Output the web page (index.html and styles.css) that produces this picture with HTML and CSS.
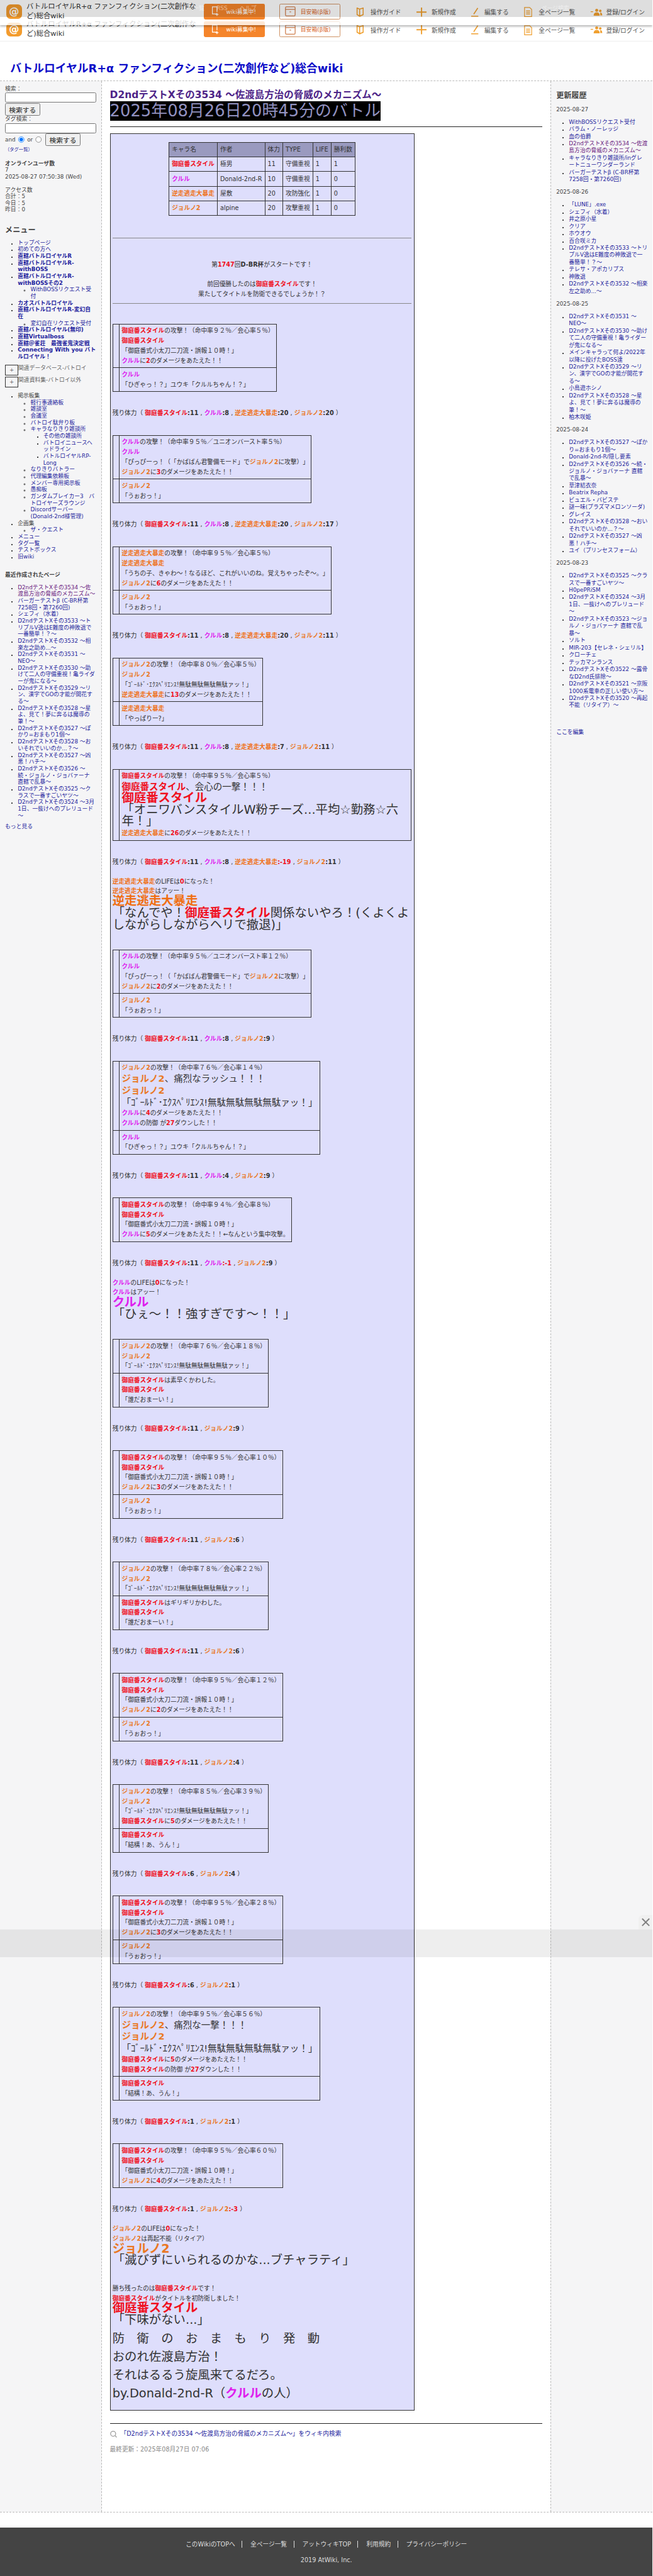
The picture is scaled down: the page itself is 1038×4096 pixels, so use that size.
FILE: index.html
```html
<!DOCTYPE html>
<html lang="ja">
<head>
    <meta charset="UTF-8">
    <title>D2ndテストXその3534 ～佐渡島方治の脅威のメカニズム～</title>
    <link rel="stylesheet" href="styles.css">
</head>
<body>
<div class="page">
    <header class="hdr">
        <div class="hdr-row">
            <div class="brand"><span class="logo">@</span><span class="brand-name">バトルロイヤルR+α ファンフィクション(二次創作など)総合wiki</span></div>
            <a class="btn-recruit"><svg width="17" height="20" viewBox="0 0 17 20" fill="none" stroke="#fff" stroke-width="1.5"><path d="M11 15H2V1h9v10M8 5h.01M11 13v6M8 16h6"/></svg>wiki募集中!</a>
            <a class="btn-box"><svg width="21" height="20" viewBox="0 0 21 20" fill="none" stroke="#d08050" stroke-width="1.6"><rect x="1" y="1" width="19" height="18" rx="2"/><path d="M1 6h19M9 11h3"/></svg>目安箱(β版)</a>
            <nav class="hdr-nav">
                <a><svg width="16" height="18" viewBox="0 0 16 18" fill="none" stroke="#f0a030" stroke-width="2"><path d="M2 1l5 2 0 14-5-3zM7 3l7-2v13l-7 3"/></svg>操作ガイド</a>
                <a class="gap-s"><svg width="20" height="18" viewBox="0 0 20 18" fill="none" stroke="#f0a030" stroke-width="2.4"><path d="M10 0v18M0 9h20"/></svg>新規作成</a>
                <a class="gap-s"><svg width="16" height="18" viewBox="0 0 16 18" fill="none" stroke="#f0a030" stroke-width="2"><path d="M13 1L5 13M0 17h14"/></svg>編集する</a>
                <a><svg width="16" height="20" viewBox="0 0 16 20" fill="none" stroke="#f0a030" stroke-width="1.5"><path d="M1 1h10l4 4v14H1zM4 8h8M4 11h8M4 14h8"/></svg>全ページ一覧</a>
                <a class="gap-xs"><svg width="24" height="14" viewBox="0 0 24 14" fill="#f0a030"><circle cx="13" cy="3" r="3"/><circle cx="20" cy="4" r="2.4"/><path d="M7 14c0-5 2-7 6-7s6 2 6 7zM20 7c2.500 0 4 2 4 6h-4zM1 5h5v1.600H1z"/></svg>登録/ログイン</a>
            </nav>
        </div>
    </header>

    <div class="hdr-float">
        <div class="hdr-row">
            <div class="brand"><span class="logo">@</span><span class="brand-name">バトルロイヤルR+α ファンフィクション(二次創作など)総合wiki</span></div>
            <a class="btn-recruit"><svg width="17" height="20" viewBox="0 0 17 20" fill="none" stroke="#fff" stroke-width="1.5"><path d="M11 15H2V1h9v10M8 5h.01M11 13v6M8 16h6"/></svg>wiki募集中!</a>
            <a class="btn-box"><svg width="21" height="20" viewBox="0 0 21 20" fill="none" stroke="#d08050" stroke-width="1.6"><rect x="1" y="1" width="19" height="18" rx="2"/><path d="M1 6h19M9 11h3"/></svg>目安箱(β版)</a>
            <nav class="hdr-nav">
                <a><svg width="16" height="18" viewBox="0 0 16 18" fill="none" stroke="#f0a030" stroke-width="2"><path d="M2 1l5 2 0 14-5-3zM7 3l7-2v13l-7 3"/></svg>操作ガイド</a>
                <a class="gap-s"><svg width="20" height="18" viewBox="0 0 20 18" fill="none" stroke="#f0a030" stroke-width="2.4"><path d="M10 0v18M0 9h20"/></svg>新規作成</a>
                <a class="gap-s"><svg width="16" height="18" viewBox="0 0 16 18" fill="none" stroke="#f0a030" stroke-width="2"><path d="M13 1L5 13M0 17h14"/></svg>編集する</a>
                <a><svg width="16" height="20" viewBox="0 0 16 20" fill="none" stroke="#f0a030" stroke-width="1.5"><path d="M1 1h10l4 4v14H1zM4 8h8M4 11h8M4 14h8"/></svg>全ページ一覧</a>
                <a class="gap-xs"><svg width="24" height="14" viewBox="0 0 24 14" fill="#f0a030"><circle cx="13" cy="3" r="3"/><circle cx="20" cy="4" r="2.4"/><path d="M7 14c0-5 2-7 6-7s6 2 6 7zM20 7c2.500 0 4 2 4 6h-4zM1 5h5v1.600H1z"/></svg>登録/ログイン</a>
            </nav>
        </div>
    </div>
    <div class="top-band">
        <span class="band-links"><span>一覧</span><span>RSS</span><span>ヘルプ</span></span>
        <span class="band-search">ページ検索</span>
    </div>

    <div class="site-title"><a>バトルロイヤルR+α ファンフィクション(二次創作など)総合wiki</a></div>

    <div class="layout">
        <aside class="side-left">
            <div class="label">検索：</div>
            <input class="search-input" type="text">
            <button class="search-btn">検索する</button>
            <div class="label">タグ検索：</div>
            <input class="search-input" type="text">
            <div class="radio-row">and <input type="radio" name="mode" checked> or <input type="radio" name="mode"> <button class="search-btn">検索する</button></div>
            <div class="tag-link"><a>（タグ一覧）</a></div>

            <div class="counter">
                <b>オンラインユーザ数</b><br>
                7<br>
                2025-08-27 07:50:38 (Wed)<br>
                <br>
                アクセス数<br>
                合計：5<br>
                今日：5<br>
                昨日：0
            </div>

            <h3 class="side-head menu-head">メニュー</h3>
            <ul class="menu">
                <li><a>トップページ</a></li>
                <li><a>初めての方へ</a></li>
                <li><a class="strong">直轄バトルロイヤルR</a></li>
                <li><a class="strong">直轄バトルロイヤルR-withBOSS</a></li>
                <li><a class="strong">直轄バトルロイヤルR-withBOSSその2</a>
                    <ul><li><a>WithBOSSリクエスト受付</a></li></ul></li>
                <li><a class="strong">カオスバトルロイヤル</a></li>
                <li><a class="strong">直轄バトルロイヤルR-変幻自在</a>
                    <ul><li><a>変幻自在リクエスト受付</a></li></ul></li>
                <li><a class="strong">直轄バトルロイヤル(無印)</a></li>
                <li><a class="strong">直轄Virtualboss</a></li>
                <li><a class="strong">直轄＠雀荘　最強雀鬼決定戦</a></li>
                <li><a class="strong">Connecting With you バトルロイヤル！</a></li>
            </ul>
            <div class="fold-row"><span class="fold-btn">+</span>関連データベース-バトロイ</div>
            <div class="fold-row"><span class="fold-btn">+</span>関連資料集-バトロイ以外</div>
            <ul class="menu board-list">
                <li>掲示板集
                    <ul>
                        <li><a>軽行事連絡板</a></li>
                        <li><a>雑談室</a></li>
                        <li><a>会議室</a></li>
                        <li><a>バトロイ駄弁り板</a></li>
                        <li><a>キャラなりきり雑談所</a>
                            <ul>
                                <li><a>その他の雑談所</a></li>
                                <li><a>バトロイニュースヘッドライン</a></li>
                                <li><a>バトルロイヤルRP-Long</a></li>
                            </ul></li>
                        <li><a>なりきりバトラー</a></li>
                        <li><a>代理編集依頼板</a></li>
                        <li><a>メンバー専用掲示板</a></li>
                        <li><a>愚痴板</a></li>
                        <li><a>ガンダムブレイカー3　バトロイヤーズラウンジ</a></li>
                        <li><a>Discordサーバー(Donald-2nd様管理)</a></li>
                    </ul></li>
                <li>企画集
                    <ul><li><a>ザ・クエスト</a></li></ul></li>
                <li><a>メニュー</a></li>
                <li><a>タグ一覧</a></li>
                <li><a>テストボックス</a></li>
                <li><a>旧wiki</a></li>
            </ul>

            <div class="recent-head">最近作成されたページ</div>
            <ul class="menu recent">
                <li><a class="visited">D2ndテストXその3534 ～佐渡島方治の脅威のメカニズム～</a></li>
                <li><a>バーガーテストβ (C-BR杯第7258回・第7260回)</a></li>
                <li><a>シェフィ（水着）</a></li>
                <li><a>D2ndテストXその3533 ～トリプルV逸はE難度の神敗退で一番簡単！？～</a></li>
                <li><a>D2ndテストXその3532 ～相楽左之助め...～</a></li>
                <li><a>D2ndテストXその3531 ～NEO～</a></li>
                <li><a>D2ndテストXその3530 ～助けて二人の守備重視！亀ライダーが鬼になる～</a></li>
                <li><a>D2ndテストXその3529 ～リン、漢字でGOの才能が開花する～</a></li>
                <li><a>D2ndテストXその3528 ～星よ、見て！夢に奔るは魔導の筆！～</a></li>
                <li><a>D2ndテストXその3527 ～ぽかり=おまもり1個～</a></li>
                <li><a>D2ndテストXその3528 ～おいそれでいいのか...？～</a></li>
                <li><a>D2ndテストXその3527 ～凶悪！ハチ～</a></li>
                <li><a>D2ndテストXその3526 ～続・ジョルノ・ジョバァーナ 直轄で乱暴～</a></li>
                <li><a>D2ndテストXその3525 ～クラスで一番すごいヤツ～</a></li>
                <li><a>D2ndテストXその3524 ～3月1日、一抜けへのプレリュード～</a></li>
            </ul>
            <div class="more-link"><a>もっと見る</a></div>
        </aside>

        <main class="content">
            <h2 class="page-title">D2ndテストXその3534 ～佐渡島方治の脅威のメカニズム～</h2>
            <div class="battle-date">2025年08月26日20時45分のバトル</div>
            <div class="rule"></div>

            <div class="battle">
                <table class="stats">
                    <tr><th>キャラ名</th><th>作者</th><th>体力</th><th>TYPE</th><th>LIFE</th><th>勝利数</th></tr>
                    <tr><td><span class="oni">御庭番スタイル</span></td><td>極男</td><td>11</td><td>守備重視</td><td>1</td><td>1</td></tr>
                    <tr><td><span class="kur">クルル</span></td><td>Donald-2nd-R</td><td>10</td><td>守備重視</td><td>1</td><td>0</td></tr>
                    <tr><td><span class="gya">逆走逃走大暴走</span></td><td>屋敷</td><td>20</td><td>攻防強化</td><td>1</td><td>0</td></tr>
                    <tr><td><span class="jor">ジョルノ2</span></td><td>alpine</td><td>20</td><td>攻撃重視</td><td>1</td><td>0</td></tr>
                </table>
                <hr class="sep sep-top">
                <div class="intro">
                    第<span class="num">1747</span>回<b>D-BR杯</b>がスタートです！<br>
                    <br>
                    前回優勝したのは<span class="oni">御庭番スタイル</span>です！<br>
                    果たしてタイトルを防衛できるでしょうか！？
                </div>
                <hr class="sep sep-bottom">

                <table class="log">
                    <tr><td class="mark"></td><td><span class="oni">御庭番スタイル</span>の攻撃！（命中率９２％／会心率５％）<br><span class="oni">御庭番スタイル</span><br>「御庭番式小太刀二刀流・誤報１０時！」<br><span class="kur">クルル</span>に<span class="num">2</span>のダメージをあたえた！！</td></tr>
                    <tr><td class="mark"></td><td><span class="kur">クルル</span><br>「ひぎゃっ！？」ユウキ「クルルちゃん！？」</td></tr>
                </table>
                <p class="hp">残り体力（ <span class="oni">御庭番スタイル</span><b>:11</b> , <span class="kur">クルル</span><b>:8</b> , <span class="gya">逆走逃走大暴走</span><b>:20</b> , <span class="jor">ジョルノ2</span><b>:20</b> ）</p>

                <table class="log">
                    <tr><td class="mark"></td><td><span class="kur">クルル</span>の攻撃！（命中率９５％／ユニオンバースト率５％）<br><span class="kur">クルル</span><br>「ぴっぴーっ！（「かばばん君警備モード」で<span class="jor">ジョルノ2</span>に攻撃）」<br><span class="jor">ジョルノ2</span>に<span class="num">3</span>のダメージをあたえた！！</td></tr>
                    <tr><td class="mark"></td><td><span class="jor">ジョルノ2</span><br>「うぉおっ！」</td></tr>
                </table>
                <p class="hp">残り体力（ <span class="oni">御庭番スタイル</span><b>:11</b> , <span class="kur">クルル</span><b>:8</b> , <span class="gya">逆走逃走大暴走</span><b>:20</b> , <span class="jor">ジョルノ2</span><b>:17</b> ）</p>

                <table class="log">
                    <tr><td class="mark"></td><td><span class="gya">逆走逃走大暴走</span>の攻撃！（命中率９５％／会心率５％）<br><span class="gya">逆走逃走大暴走</span><br>「うちの子、きゃわ～！なるほど、これがいいのね。覚えちゃったぞ～。」<br><span class="jor">ジョルノ2</span>に<span class="num">6</span>のダメージをあたえた！！</td></tr>
                    <tr><td class="mark"></td><td><span class="jor">ジョルノ2</span><br>「うぉおっ！」</td></tr>
                </table>
                <p class="hp">残り体力（ <span class="oni">御庭番スタイル</span><b>:11</b> , <span class="kur">クルル</span><b>:8</b> , <span class="gya">逆走逃走大暴走</span><b>:20</b> , <span class="jor">ジョルノ2</span><b>:11</b> ）</p>

                <table class="log">
                    <tr><td class="mark"></td><td><span class="jor">ジョルノ2</span>の攻撃！（命中率８０％／会心率５％）<br><span class="jor">ジョルノ2</span><br>「ｺﾞｰﾙﾄﾞ･ｴｸｽﾍﾟﾘｴﾝｽ!無駄無駄無駄無駄ァッ！」<br><span class="gya">逆走逃走大暴走</span>に<span class="num">13</span>のダメージをあたえた！！</td></tr>
                    <tr><td class="mark"></td><td><span class="gya">逆走逃走大暴走</span><br>「やっぱりー?」</td></tr>
                </table>
                <p class="hp">残り体力（ <span class="oni">御庭番スタイル</span><b>:11</b> , <span class="kur">クルル</span><b>:8</b> , <span class="gya">逆走逃走大暴走</span><b>:7</b> , <span class="jor">ジョルノ2</span><b>:11</b> ）</p>

                <table class="log log-wide">
                    <tr><td class="mark"></td><td><span class="oni">御庭番スタイル</span>の攻撃！（命中率９５％／会心率５％）<br><span class="size-l"><span class="oni">御庭番スタイル</span>、会心の一撃！！！</span><br><span class="size-xl oni">御庭番スタイル</span><br><span class="size-xl">「オニワバンスタイルW粉チーズ...平均☆勤務☆六年！」</span><br><span class="gya">逆走逃走大暴走</span>に<span class="num">26</span>のダメージをあたえた！！</td></tr>
                </table>
                <p class="hp hp-out">残り体力（ <span class="oni">御庭番スタイル</span><b>:11</b> , <span class="kur">クルル</span><b>:8</b> , <span class="gya">逆走逃走大暴走</span><b class="num">:-19</b> , <span class="jor">ジョルノ2</span><b>:11</b> ）</p>
                <div class="last-words">
                    <span class="gya">逆走逃走大暴走</span>のLIFEは<span class="num">0</span>になった！<br>
                    <span class="gya">逆走逃走大暴走</span>はアッー！<br>
                    <span class="size-xl gya">逆走逃走大暴走</span><br>
                    <span class="size-xl">「なんでや！<span class="oni">御庭番スタイル</span>関係ないやろ！(くよくよしながらしながらヘリで撤退)」</span>
                </div>

                <table class="log">
                    <tr><td class="mark"></td><td><span class="kur">クルル</span>の攻撃！（命中率９５％／ユニオンバースト率１２％）<br><span class="kur">クルル</span><br>「ぴっぴーっ！（「かばばん君警備モード」で<span class="jor">ジョルノ2</span>に攻撃）」<br><span class="jor">ジョルノ2</span>に<span class="num">2</span>のダメージをあたえた！！</td></tr>
                    <tr><td class="mark"></td><td><span class="jor">ジョルノ2</span><br>「うぉおっ！」</td></tr>
                </table>
                <p class="hp">残り体力（ <span class="oni">御庭番スタイル</span><b>:11</b> , <span class="kur">クルル</span><b>:8</b> , <span class="jor">ジョルノ2</span><b>:9</b> ）</p>

                <table class="log">
                    <tr><td class="mark"></td><td><span class="jor">ジョルノ2</span>の攻撃！（命中率７６％／会心率１４％）<br><span class="size-l"><span class="jor">ジョルノ2</span>、痛烈なラッシュ！！！</span><br><span class="size-l jor">ジョルノ2</span><br><span class="size-l">「ｺﾞｰﾙﾄﾞ･ｴｸｽﾍﾟﾘｴﾝｽ!無駄無駄無駄無駄ァッ！」</span><br><span class="kur">クルル</span>に<span class="num">4</span>のダメージをあたえた！！<br><span class="kur">クルル</span>の防御 が<span class="num">27</span>ダウンした！！</td></tr>
                    <tr><td class="mark"></td><td><span class="kur">クルル</span><br>「ひぎゃっ！？」ユウキ「クルルちゃん！？」</td></tr>
                </table>
                <p class="hp">残り体力（ <span class="oni">御庭番スタイル</span><b>:11</b> , <span class="kur">クルル</span><b>:4</b> , <span class="jor">ジョルノ2</span><b>:9</b> ）</p>

                <table class="log">
                    <tr><td class="mark"></td><td><span class="oni">御庭番スタイル</span>の攻撃！（命中率９４％／会心率８％）<br><span class="oni">御庭番スタイル</span><br>「御庭番式小太刀二刀流・誤報１０時！」<br><span class="kur">クルル</span>に<span class="num">5</span>のダメージをあたえた！！←なんという集中攻撃。</td></tr>
                </table>
                <p class="hp hp-out">残り体力（ <span class="oni">御庭番スタイル</span><b>:11</b> , <span class="kur">クルル</span><b class="num">:-1</b> , <span class="jor">ジョルノ2</span><b>:9</b> ）</p>
                <div class="last-words">
                    <span class="kur">クルル</span>のLIFEは<span class="num">0</span>になった！<br>
                    <span class="kur">クルル</span>はアッー！<br>
                    <span class="size-xl kur">クルル</span><br>
                    <span class="size-xl">「ひぇ～！！強すぎです～！！」</span>
                </div>

                <table class="log">
                    <tr><td class="mark"></td><td><span class="jor">ジョルノ2</span>の攻撃！（命中率７６％／会心率１８％）<br><span class="jor">ジョルノ2</span><br>「ｺﾞｰﾙﾄﾞ･ｴｸｽﾍﾟﾘｴﾝｽ!無駄無駄無駄無駄ァッ！」</td></tr>
                    <tr><td class="mark"></td><td><span class="oni">御庭番スタイル</span>は素早くかわした。<br><span class="oni">御庭番スタイル</span><br>「誰だおまーい！」</td></tr>
                </table>
                <p class="hp">残り体力（ <span class="oni">御庭番スタイル</span><b>:11</b> , <span class="jor">ジョルノ2</span><b>:9</b> ）</p>

                <table class="log">
                    <tr><td class="mark"></td><td><span class="oni">御庭番スタイル</span>の攻撃！（命中率９５％／会心率１０％）<br><span class="oni">御庭番スタイル</span><br>「御庭番式小太刀二刀流・誤報１０時！」<br><span class="jor">ジョルノ2</span>に<span class="num">3</span>のダメージをあたえた！！</td></tr>
                    <tr><td class="mark"></td><td><span class="jor">ジョルノ2</span><br>「うぉおっ！」</td></tr>
                </table>
                <p class="hp">残り体力（ <span class="oni">御庭番スタイル</span><b>:11</b> , <span class="jor">ジョルノ2</span><b>:6</b> ）</p>

                <table class="log">
                    <tr><td class="mark"></td><td><span class="jor">ジョルノ2</span>の攻撃！（命中率７８％／会心率２２％）<br><span class="jor">ジョルノ2</span><br>「ｺﾞｰﾙﾄﾞ･ｴｸｽﾍﾟﾘｴﾝｽ!無駄無駄無駄無駄ァッ！」</td></tr>
                    <tr><td class="mark"></td><td><span class="oni">御庭番スタイル</span>はギリギリかわした。<br><span class="oni">御庭番スタイル</span><br>「誰だおまーい！」</td></tr>
                </table>
                <p class="hp">残り体力（ <span class="oni">御庭番スタイル</span><b>:11</b> , <span class="jor">ジョルノ2</span><b>:6</b> ）</p>

                <table class="log">
                    <tr><td class="mark"></td><td><span class="oni">御庭番スタイル</span>の攻撃！（命中率９５％／会心率１２％）<br><span class="oni">御庭番スタイル</span><br>「御庭番式小太刀二刀流・誤報１０時！」<br><span class="jor">ジョルノ2</span>に<span class="num">2</span>のダメージをあたえた！！</td></tr>
                    <tr><td class="mark"></td><td><span class="jor">ジョルノ2</span><br>「うぉおっ！」</td></tr>
                </table>
                <p class="hp">残り体力（ <span class="oni">御庭番スタイル</span><b>:11</b> , <span class="jor">ジョルノ2</span><b>:4</b> ）</p>

                <table class="log">
                    <tr><td class="mark"></td><td><span class="jor">ジョルノ2</span>の攻撃！（命中率８５％／会心率３９％）<br><span class="jor">ジョルノ2</span><br>「ｺﾞｰﾙﾄﾞ･ｴｸｽﾍﾟﾘｴﾝｽ!無駄無駄無駄無駄ァッ！」<br><span class="oni">御庭番スタイル</span>に<span class="num">5</span>のダメージをあたえた！！</td></tr>
                    <tr><td class="mark"></td><td><span class="oni">御庭番スタイル</span><br>「結構！あ、うん！」</td></tr>
                </table>
                <p class="hp">残り体力（ <span class="oni">御庭番スタイル</span><b>:6</b> , <span class="jor">ジョルノ2</span><b>:4</b> ）</p>

                <table class="log">
                    <tr><td class="mark"></td><td><span class="oni">御庭番スタイル</span>の攻撃！（命中率９５％／会心率２８％）<br><span class="oni">御庭番スタイル</span><br>「御庭番式小太刀二刀流・誤報１０時！」<br><span class="jor">ジョルノ2</span>に<span class="num">3</span>のダメージをあたえた！！</td></tr>
                    <tr><td class="mark"></td><td><span class="jor">ジョルノ2</span><br>「うぉおっ！」</td></tr>
                </table>
                <p class="hp">残り体力（ <span class="oni">御庭番スタイル</span><b>:6</b> , <span class="jor">ジョルノ2</span><b>:1</b> ）</p>

                <table class="log">
                    <tr><td class="mark"></td><td><span class="jor">ジョルノ2</span>の攻撃！（命中率９５％／会心率５６％）<br><span class="size-l"><span class="jor">ジョルノ2</span>、痛烈な一撃！！！</span><br><span class="size-l jor">ジョルノ2</span><br><span class="size-l">「ｺﾞｰﾙﾄﾞ･ｴｸｽﾍﾟﾘｴﾝｽ!無駄無駄無駄無駄ァッ！」</span><br><span class="oni">御庭番スタイル</span>に<span class="num">5</span>のダメージをあたえた！！<br><span class="oni">御庭番スタイル</span>の防御 が<span class="num">27</span>ダウンした！！</td></tr>
                    <tr><td class="mark"></td><td><span class="oni">御庭番スタイル</span><br>「結構！あ、うん！」</td></tr>
                </table>
                <p class="hp">残り体力（ <span class="oni">御庭番スタイル</span><b>:1</b> , <span class="jor">ジョルノ2</span><b>:1</b> ）</p>

                <table class="log">
                    <tr><td class="mark"></td><td><span class="oni">御庭番スタイル</span>の攻撃！（命中率９５％／会心率６０％）<br><span class="oni">御庭番スタイル</span><br>「御庭番式小太刀二刀流・誤報１０時！」<br><span class="jor">ジョルノ2</span>に<span class="num">4</span>のダメージをあたえた！！</td></tr>
                </table>
                <p class="hp hp-out">残り体力（ <span class="oni">御庭番スタイル</span><b>:1</b> , <span class="jor">ジョルノ2</span><b class="num">:-3</b> ）</p>
                <div class="last-words last-words-end">
                    <span class="jor">ジョルノ2</span>のLIFEは<span class="num">0</span>になった！<br>
                    <span class="jor">ジョルノ2</span>は再起不能（リタイア）<br>
                    <span class="size-xl jor">ジョルノ2</span><br>
                    <span class="size-xl">「滅びずにいられるのかな...ブチャラティ」</span>
                </div>
                <div class="winner">
                    勝ち残ったのは<span class="oni">御庭番スタイル</span>です！<br>
                    <span class="oni">御庭番スタイル</span>がタイトルを初防衛しました！<br>
                    <span class="size-xl oni">御庭番スタイル</span><br>
                    <span class="size-xl">「下味がない...」</span>
                </div>
                <div class="closing">
                    防　衛　の　お　ま　も　り　発　動<br>
                    おのれ佐渡島方治！<br>
                    それはるるう旋風来てるだろ。<br>
                    by.Donald-2nd-R（<span class="kur">クルル</span>の人）
                </div>
            </div>

            <div class="rule rule-end"></div>
            <div class="wiki-search">
                <svg width="14" height="14" viewBox="0 0 14 14" fill="none" stroke="#999" stroke-width="1.500"><circle cx="6" cy="6" r="5"/><path d="M9.500 9.500L13 13"/></svg>
                <a>「D2ndテストXその3534 ～佐渡島方治の脅威のメカニズム～」をウィキ内検索</a>
            </div>
            <div class="updated">最終更新：2025年08月27日 07:06</div>
        </main>

        <aside class="side-right">
            <h3 class="side-head">更新履歴</h3>
            <p class="date">2025-08-27</p>
            <ul class="menu history">
                <li><a>WithBOSSリクエスト受付</a></li>
                <li><a>バラム・ノーレッジ</a></li>
                <li><a>血の伯爵</a></li>
                <li><a class="visited">D2ndテストXその3534 ～佐渡島方治の脅威のメカニズム～</a></li>
                <li><a>キャラなりきり雑談所/inグレートニューワンダーランド</a></li>
                <li><a>バーガーテストβ (C-BR杯第7258回・第7260回)</a></li>
            </ul>
            <p class="date">2025-08-26</p>
            <ul class="menu history">
                <li><a>「LUNE」.exe</a></li>
                <li><a>シェフィ（水着）</a></li>
                <li><a>井之原小星</a></li>
                <li><a>クリア</a></li>
                <li><a>ホウオウ</a></li>
                <li><a>百合咲ミカ</a></li>
                <li><a>D2ndテストXその3533 ～トリプルV逸はE難度の神敗退で一番簡単！？～</a></li>
                <li><a>テレサ・アポカリプス</a></li>
                <li><a>神敗退</a></li>
                <li><a>D2ndテストXその3532 ～相楽左之助め...～</a></li>
            </ul>
            <p class="date">2025-08-25</p>
            <ul class="menu history">
                <li><a>D2ndテストXその3531 ～NEO～</a></li>
                <li><a>D2ndテストXその3530 ～助けて二人の守備重視！亀ライダーが鬼になる～</a></li>
                <li><a>メインキャラって何よ/2022年以降に投げたBOSS達</a></li>
                <li><a>D2ndテストXその3529 ～リン、漢字でGOの才能が開花する～</a></li>
                <li><a>小鳥遊ホシノ</a></li>
                <li><a>D2ndテストXその3528 ～星よ、見て！夢に奔るは魔導の筆！～</a></li>
                <li><a>柏木咲姫</a></li>
            </ul>
            <p class="date">2025-08-24</p>
            <ul class="menu history">
                <li><a>D2ndテストXその3527 ～ぽかり=おまもり1個～</a></li>
                <li><a>Donald-2nd-R/隠し要素</a></li>
                <li><a>D2ndテストXその3526 ～続・ジョルノ・ジョバァーナ 直轄で乱暴～</a></li>
                <li><a>草津結衣奈</a></li>
                <li><a>Beatrix Repha</a></li>
                <li><a>ビュエル・バビステ</a></li>
                <li><a>謎一味(プラズマメロンソーダ)</a></li>
                <li><a>グレイス</a></li>
                <li><a>D2ndテストXその3528 ～おいそれでいいのか...？～</a></li>
                <li><a>D2ndテストXその3527 ～凶悪！ハチ～</a></li>
                <li><a>ユイ（プリンセスフォーム）</a></li>
            </ul>
            <p class="date">2025-08-23</p>
            <ul class="menu history">
                <li><a>D2ndテストXその3525 ～クラスで一番すごいヤツ～</a></li>
                <li><a>H0pePRiSM</a></li>
                <li><a>D2ndテストXその3524 ～3月1日、一抜けへのプレリュード～</a></li>
                <li><a>D2ndテストXその3523 ～ジョルノ・ジョバァーナ 直轄で乱暴～</a></li>
                <li><a>ソルト</a></li>
                <li><a>MIR-203【セレネ・シェリル】</a></li>
                <li><a>クローチェ</a></li>
                <li><a>テッカマンランス</a></li>
                <li><a>D2ndテストXその3522 ～露骨なD2nd氏排除～</a></li>
                <li><a>D2ndテストXその3521 ～京阪1000系電車の正しい使い方～</a></li>
                <li><a>D2ndテストXその3520 ～再起不能（リタイア）～</a></li>
            </ul>
            <div class="edit-link"><a>ここを編集</a></div>
        </aside>
    </div>

    <footer class="footer">
        <ul class="footer-links">
            <li>このWikiのTOPへ</li>
            <li>全ページ一覧</li>
            <li>アットウィキTOP</li>
            <li>利用規約</li>
            <li>プライバシーポリシー</li>
        </ul>
        <div class="copyright">2019 AtWiki, Inc.</div>
    </footer>

    <div class="ad-band"></div>
    <div class="ad-close"><svg width="16" height="16" viewBox="0 0 16 16" fill="none" stroke="#808080" stroke-width="2.500"><path d="M1 1l14 14M15 1L1 15"/></svg></div>
</div>
</body>
</html>
```

FILE: styles.css
```css
body {
    margin: 0;
    background: #fff;
}
a {
    color: #1e1e9e;
    text-decoration: none;
}
/* whole page is drawn at reference size and scaled once here */
.page {
    zoom: 0.808;
    position: relative;
    width: 1284px;
    overflow: hidden;
    font-family: "DejaVu Sans", "Noto Sans CJK JP", sans-serif;
    font-size: 10.88px;
    color: #333;
    text-spacing-trim: space-all;
}

/* header */
.hdr {
    height: 82px;
    padding-top: 41px;
    box-sizing: border-box;
    border-bottom: 1px solid #eee;
}
.hdr-float {
    position: absolute;
    top: 0;
    left: 0;
    right: 0;
    height: 49px;
    padding-top: 6px;
    box-sizing: border-box;
    overflow: hidden;
    background: rgba(255,255,255,0.8);
    box-shadow: 0 2px 4px rgba(0,0,0,0.3);
}
.top-band {
    position: absolute;
    top: 0;
    left: 0;
    right: 0;
    height: 33px;
    background: rgba(0,0,0,0.13);
    color: rgba(255,255,255,0.5);
    font-size: 11px;
    line-height: 33px;
}
.band-links {
    position: absolute;
    left: 380px;
}
.band-links span {
    margin-right: 24px;
}
.band-search {
    position: absolute;
    left: 1065px;
}
.hdr-row {
    display: flex;
    align-items: center;
    height: 34px;
}
.brand {
    display: flex;
    align-items: center;
    width: 401px;
    padding-left: 12px;
    box-sizing: border-box;
}
.logo {
    display: flex;
    align-items: center;
    justify-content: center;
    flex: none;
    width: 31px;
    height: 28px;
    margin-right: 9px;
    border-radius: 8px;
    background: #f39c2e;
    color: #fff;
    font-size: 20px;
    font-weight: bold;
}
.brand-name {
    width: 335px;
    font-size: 14px;
    line-height: 18px;
    color: #333;
}
.btn-recruit, .btn-box {
    display: flex;
    align-items: center;
    flex: none;
    width: 120px;
    height: 31px;
    box-sizing: border-box;
    border-radius: 3px;
    font-size: 11px;
}
.btn-recruit {
    gap: 12px;
    padding-left: 15px;
    background: #f5852b;
    color: #fff;
}
.btn-box {
    gap: 9px;
    margin-left: 28px;
    padding-left: 11px;
    border: 1px solid #cf9264;
    color: #d9662a;
}
.hdr-nav {
    display: flex;
    align-items: center;
    margin-left: 31px;
    margin-top: 2px;
}
.hdr-nav a {
    display: flex;
    align-items: center;
    gap: 13px;
    margin-right: 30px;
    font-size: 12px;
    color: #555;
}
.hdr-nav .gap-s {
    gap: 10px;
}
.hdr-nav .gap-xs {
    gap: 7px;
    margin-right: 0;
}

.site-title {
    height: 76px;
    padding: 40px 0 0 20px;
    box-sizing: border-box;
    font-size: 22px;
    font-weight: bold;
    line-height: 26px;
}
.site-title a {
    color: #0c0cc8;
}

/* three columns */
.layout {
    display: flex;
    border-top: 1px dashed #bbb;
    border-bottom: 1px dashed #bbb;
}
.side-left, .side-right {
    flex: none;
    width: 201px;
    box-sizing: border-box;
    background: #f5f5f6;
    color: #444;
}
.side-left {
    padding: 9px 10.8px 0 10px;
    line-height: 13px;
    border-right: 1px dashed #bbb;
}
.side-right {
    padding: 19px 10px 0;
    border-left: 1px dashed #bbb;
}
.content {
    flex: 1;
    min-width: 0;
    padding: 16px 16px 113px 15px;
}

/* left column */
.label {
    line-height: 13px;
}
.search-input {
    display: block;
    width: 179px;
    height: 20px;
    margin: 1px 0 0;
    padding: 0;
    box-sizing: border-box;
    border: 1px solid #767676;
    border-radius: 3px;
    background: #fff;
}
.search-btn {
    height: 25px;
    margin: 1px 0 0;
    padding: 0 6.5px;
    border: 1px solid #767676;
    border-radius: 3px;
    background: #efefef;
    font-family: inherit;
    font-size: 13.33px;
    color: #222;
}
.radio-row {
    display: flex;
    align-items: center;
    gap: 3px;
    height: 25px;
}
.radio-row input {
    margin: 0 2px;
    width: 13px;
    height: 13px;
}
.radio-row .search-btn {
    margin-left: 2px;
}
.tag-link {
    font-size: 9px;
    margin-top: 1px;
}
.counter {
    margin-top: 14px;
}
.side-head {
    margin: 0;
    font-size: 15px;
    line-height: 20px;
}
.menu-head {
    margin-top: 24px;
    margin-bottom: 8px;
}
.menu, .menu ul {
    margin: 0;
    padding-left: 25px;
    line-height: 13.2px;
}
.menu {
    list-style: square;
}
.menu ul {
    list-style: circle;
}
.menu ul ul {
    list-style: square;
}
.menu li::marker {
    font-size: 7px;
}
.strong {
    font-weight: bold;
}
.visited {
    color: #6a2080;
}
.fold-row {
    display: flex;
    height: 22px;
    margin-bottom: 1px;
    color: #666;
}
.fold-btn {
    flex: none;
    width: 26px;
    height: 21px;
    box-sizing: border-box;
    border: 1px solid #333;
    text-align: center;
    line-height: 19px;
}
.menu + .fold-row {
    margin-top: 9.5px;
}
.board-list {
    margin-top: 9px;
}
.recent-head {
    margin-top: 22px;
    font-weight: bold;
}
.recent {
    margin-top: 12px;
}
.more-link {
    margin-top: 8px;
    padding-bottom: 20px;
}

/* main column */
.page-title {
    margin: 0;
    font-size: 19.2px;
    line-height: 24px;
    color: #4d2488;
}
.battle-date {
    display: inline-block;
    vertical-align: top;
    background: #000;
    color: #9292c0;
    font-size: 32px;
    line-height: 38px;
}
.rule {
    margin-top: 12px;
    border-top: 1px solid #222;
}
.battle {
    width: 600px;
    margin-top: 12px;
    padding: 16px 5px 14px 4px;
    box-sizing: border-box;
    border: 1px solid #333;
    background: #dedefc;
    font-size: 12px;
    line-height: 19.5px;
}
.stats {
    margin: 0 auto;
    border-collapse: collapse;
}
.stats th, .stats td {
    padding: 4px 5px;
    border: 1px solid #333;
    font-weight: normal;
    text-align: left;
}
.stats th {
    background: #9a9abf;
}
.sep {
    border: 0;
    border-top: 1px solid #888;
}
.sep-top {
    margin: 44px 0 41px;
}
.sep-bottom {
    margin: 8px 0 39px;
}
.intro {
    text-align: center;
}
.log {
    border-collapse: collapse;
    border: 1px solid #333;
}
.log td {
    padding: 3.5px 4px;
    border: 1px solid #333;
}
.log td.mark {
    width: 13px;
    padding: 0;
    box-sizing: border-box;
}
.hp {
    margin: 32px 0 33px;
}
.hp-out {
    margin-bottom: 19px;
}
.last-words {
    margin-bottom: 35px;
}
.last-words-end {
    margin-bottom: 32px;
}
.closing {
    font-size: 24px;
    line-height: 35.5px;
    margin-top: 7px;
}
.oni, .kur, .gya, .jor, .num {
    font-weight: bold;
}
.oni, .num {
    color: #f01020;
}
.kur {
    color: #de20ee;
}
.gya {
    color: #f06e10;
}
.jor {
    color: #ea7824;
}
.size-l {
    font-size: 18px;
    line-height: 23px;
}
.size-xl {
    font-size: 24px;
}
.rule-end {
    margin-top: 25px;
}
.wiki-search {
    display: flex;
    align-items: center;
    gap: 6px;
    margin-top: 12px;
    padding-left: 1px;
    font-size: 12px;
    line-height: 18px;
}
.updated {
    margin-top: 13px;
    font-size: 12px;
    line-height: 18px;
    color: #888;
}

/* right column */
.date {
    margin: 10.5px 0;
    line-height: 14.2px;
}
.history, .history li {
    line-height: 14.2px;
}
.edit-link {
    margin-top: 39px;
    line-height: 14px;
}

/* footer */
.footer {
    margin-top: 29px;
    height: 96px;
    padding-top: 26px;
    box-sizing: border-box;
    background: #444;
    color: #ddd;
    font-size: 12px;
    text-align: center;
}
.footer-links {
    display: flex;
    justify-content: center;
    margin: 0;
    padding: 0;
    list-style: none;
    line-height: 14px;
}
.footer-links li + li {
    margin-left: 13px;
    padding-left: 16px;
    border-left: 1px solid #ddd;
}
.copyright {
    margin-top: 17px;
    line-height: 14px;
}

/* sticky ad strip lying over the page */
.ad-band {
    position: absolute;
    top: 3797px;
    left: 0;
    right: 0;
    height: 55px;
    background: rgba(0,0,0,0.065);
}
.ad-close {
    position: absolute;
    top: 3769px;
    right: 0;
    display: flex;
    align-items: center;
    justify-content: center;
    width: 28px;
    height: 28px;
    border-radius: 8px 0 0 0;
    background: #f0f0f0;
}
```
